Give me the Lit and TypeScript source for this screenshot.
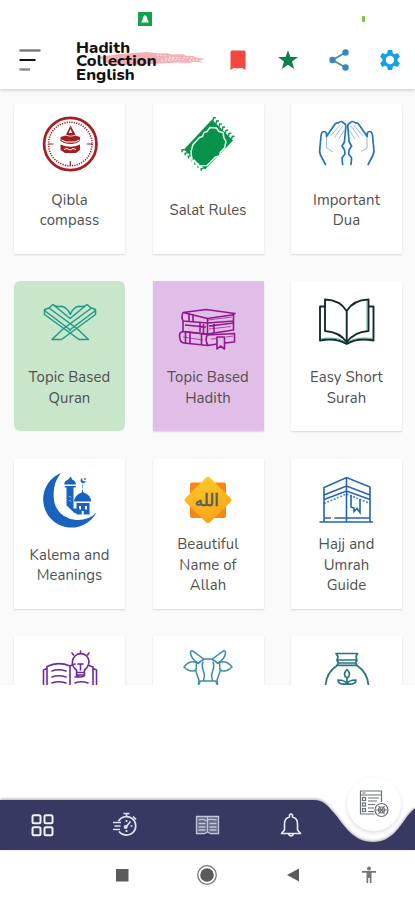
import { LitElement, html, svg, css } from "lit";
import { customElement, property } from "lit/decorators.js";

const range = (n: number) => Array.from({ length: n }, (_, i) => i);

const art: Record<string, unknown> = {
  compass: svg`
    <g fill="none" stroke="#a31f22">
      <circle cx="30.3" cy="30" r="26.2" stroke-width="2.7"/>
      <circle cx="30.3" cy="30" r="21.8" stroke-width="1.6" stroke-dasharray="1.2 1.2"/>
      <path stroke-width="1.2" d="M30.300 47v5M8.500 30h5M47 30h5"/>
    </g>
    <g fill="#a31f22">
      <path fill-rule="evenodd" d="M30.500 11.500l5 9q-5 2.500-9.500 0zM30.500 15l-1.800 4h3.600z"/>
      <path d="M20.500 23l5-1.500q5 2 10 0l4.500 1.500v4l-3.500 2q-6 2-12 0l-4-2z"/>
      <path d="M20.500 30.500q10 4.500 19.500 0v5.500l-4 3h-11l-4.500-3z"/>
    </g>
    <path d="M21.500 26l4.500 2h9l4.500-2M24 35.500l3-1 3 1.500 3-1.500 3 1" fill="none" stroke="#fff" stroke-width="1"/>`,
  rug: svg`
    <path d="M6 35.500L34 5.500 55 26.500 27 55.500z" fill="#07914b"/>
    <g stroke="#07914b" stroke-width="1.400" fill="none">
      ${range(7).map((i) => svg`<path d=${`M${6.5 + i * 3.2} ${35.5 + i * 3.1}l-2.600 .6 .2 2.200M${35 + i * 3.1} ${6.5 + i * 3.1}l.6-2.600 2.200-.2`}/>`)}
    </g>
    <path d="M13 37.500l2-7 6.500-7 3-1 1.500-4 3-1 3-4 6.500 .5 2.500 3.500 4 1 1 5.500 2 3.500-1.500 6.500-4 4-1 4-4 1-8.500 8.500-8.500.5-3-4-3.500-1z" fill="none" stroke="#e9fff1" stroke-width="1.500" stroke-linejoin="round"/>`,
  hands: svg`
    ${["", "translate(59.6 0) scale(-1 1)"].map((t) => svg`
      <g transform=${t} fill="none" stroke="#2372bd" stroke-linecap="round" stroke-linejoin="round">
        <path stroke-width="1.700" d="M8.500 50.500L3.500 41Q2 38 3 33l1-11q.5-4.500 3-4.500 3 0 2.500 5l7.500-11Q19 8 21 9q4-3 5.500 0 2.500.5 2.300 4l-.8 9-.6 6-2.400 4 2.500 4 .5 4-3 4 .6 6.500"/>
        <path stroke-width=".8" opacity=".6" d="M9.500 22v12l6 3.500M14 21.500l9-10.500M17.500 23.500l8-11.500M22 24.500l5-8"/>
      </g>`)}`,
  stand: svg`
    <g fill="none" stroke="#1f998b" stroke-width="1.500" stroke-linejoin="round">
      <path d="M12 48.500h9.500L55.500 23.500v-5L51.500 17 23 38z"/>
      <path d="M48.500 48.500H39L4.500 23.500v-5L9 17 37.500 38z"/>
      <path d="M4.500 19.500L31 39.500M55.500 19.500L29 39.500M9 17l4-3.500 17 14 17-14 4 3.500M13 13.500q4 3 8.500 1.700 6 1.300 8.800 8.300 2.500-7 8.500-8.300 4.500 1.300 8.500-1.700"/>
    </g>`,
  books: svg`
    <g fill="none" stroke="#92168c" stroke-width="1.600" stroke-linejoin="round">
      <path d="M5 21.500L28 18.500l29 4-3.500 1.500-24 3.500L5 21.500q-2 4 0 8.500l24.500 2v-4.500M29.500 32l26-2v-7M5 30.500v10l24.500 2.500 26-4v-9M29.500 32v11"/>
      <path d="M5 40.500q-4.500.5-3.200 6Q2 51.500 6 52l24 2.500 9-1.500M5 40.500l24.500 3q-3 5 .5 11M46.500 52l10-1v-8.500L29.500 44"/>
      <path d="M11 22v8M15 23v8M7 34l21 2M22 32v9M25.500 33v9M7.500 41.500v10.500M12 42v10.500M23.500 43v10.500M31 35l25-3M36 33v9M39 46v12l3.500-3 4 3V46z"/>
    </g>
    <path d="M30 29l24-3M31 38l22-2.500M33 48l6-.5M48 46l7-1M5 46l20 3" fill="none" stroke="#92168c" stroke-width="1" opacity=".7"/>`,
  book: svg`
    <g fill="none" stroke="#152b2b" stroke-width="1.900" stroke-linejoin="round">
      <path d="M29.700 20v33M29.700 20Q23 9 8 8.500V40q15 1 21.700 11.500M29.700 20Q36 9 51.500 8.500V40q-15 1-21.800 11.500"/>
      <path d="M8 15.500H3V49.500q16-3 26.700 3.500Q40 46.500 56.500 49.500v-34h-5"/>
    </g>
    <path d="M4.500 47.500q15-2 24 3.500M55 47.500q-15-2-24 3.500M50 10v29" fill="none" stroke="#2f9278" stroke-width=".8"/>`,
  crescent: svg`
    <g fill="#1763bd">
      <path d="M21 4A28.300 28.300 0 1 0 56.500 43.500Q49 51.500 36 51 19 49 14.500 34 11 16 21 4z"/>
      <path d="M31 7.500l1 3q4 1.500 3.900 5H24.200q0-3.500 4-5zM24.800 17h11v1.500h-2.300v21h6v5.500l-5-1-8-7.500V18.500h-1.700z"/>
      <path d="M42.500 20l1 3.500q7.500 2.500 7.500 9h-17q.5-6.500 7.700-9z"/>
      <path fill-rule="evenodd" d="M36.500 34h13v11.500h-13zM39 37v3.500h2V37zM45 37v3.500h2V37zM41.700 42v3.500h2V42z"/>
      <path d="M42 8.500q-3 3.500 0 5.500 3 1 4-2l-2.500.5q-1.700-1-1.500-4z"/><circle cx="45" cy="10" r=".9"/>
    </g>
    <path d="M28.500 27l3 1.500M28.500 31l3 1.500M42.500 15.500v4" stroke="#7facdf" stroke-width="1"/>`,
  allah: svg`
    <defs><linearGradient id="gold" x2=".3" y2="1"><stop stop-color="#ffcb2b"/><stop offset="1" stop-color="#fba718"/></linearGradient></defs>
    <rect x="12" y="13.500" width="36" height="35.500" rx="2" fill="#f58716"/>
    <path d="M28 8.700q2-2 4 0L52.500 29q2 2 0 4L32 53.300q-2 2-4 0L7.500 33q-2-2 0-4z" fill="url(#gold)"/>
    <text x="28.800" y="37" text-anchor="middle" font-family="DejaVu Sans, sans-serif" font-size="16.500" fill="#4f625a" stroke="#4f625a" stroke-width=".6">الله</text>`,
  kaaba: svg`
    <g fill="none" stroke="#2563ac" stroke-width="1.600">
      <path d="M2.500 53h53.500M7 53V18.500L29.500 8.500 53 18v35M29.500 8.500V53M7 49h7M17.500 49H53"/>
      <path d="M7 26l22.500-9L53 26M7 30.500L29.500 22 53 30.500"/>
      <path stroke-dasharray="2 1.500" stroke-width="1.700" opacity=".75" d="M7 34.500L29.500 25 53 34.500"/>
      <path d="M34 26v12l3 1v3.500l3-3 3 4V30"/>
    </g>`,
  idea: svg`
    <g fill="none" stroke="#6b2aa0" stroke-width="1.600" stroke-linecap="round">
      <path d="M7 50V20.500Q18 15 30 20M3.500 50V24L7 22.500M30 20v30M30 20q2.500-1.500 5-2M49 19.500l4 1.500v29M56.500 50V24L53 22.500"/>
      <path d="M12 25q6-2.500 14 0M12 31q6-2.500 14 0M12 37q6-2.500 14 0M35 37q6-2.500 13 0M35 31h3"/>
      <path d="M36.500 24q-5-3.500-4-9a8.300 8.300 0 0 1 16.500 0q0 5.500-4.500 9v5h-8zM37.500 26.500h6M38 18h5M40.500 18v6M37 30q3.500 2 7 0M40.500 5v2M32 7l1.500 2M49 7l-1.500 2"/>
    </g>`,
  cow: svg`
    <g fill="none" stroke="#3b8ca6" stroke-width="1.500" stroke-linejoin="round">
      <path d="M26.500 13.500L14.500 4.800q-2-.5-2 2 0 5.500 8 10.700M33.500 13.500L45.500 4.800q2-.5 2 2 0 5.500-8 10.700"/>
      <path d="M20 18q4-5.500 10-5 6-.5 10 5M18.500 16.500q-7-2.500-12.500 4.500 6 6 12 3zM41.500 16.500q7-2.500 12.500 4.500-6 6-12 3zM17.500 24q1.500 5 3.500 10l-.5 5 2-4h15l2 4-.5-5q2-5 3.500-10"/>
      <path d="M25 15.500q-1.500 5 0 8.500l1.500 5-1 6M35 15.500q1.500 5 0 8.500l-1.500 5 1 6"/>
    </g>`,
  jar: svg`
    <g fill="none" stroke="#267481" stroke-width="1.700" stroke-linejoin="round">
      <path d="M19 7.500h21.500l-1.500 3 1 4-1.500 2 1.500 2.800H20l1.500-2.800-1.500-2 1-4zM20.500 14h19M21 17h18.500"/>
      <path d="M20 19.500Q9 27 8.500 40M40 19.500Q51 27 51.500 40"/>
      <path d="M30 36v-4q-5-3.500 0-8.500 5 5 0 8.500M30 38q-1.500-4-9-4 0 5 9 4zM30 38q1.500-4 9-4 0 5-9 4z"/>
    </g>`,
};

const cards: [string, string[], string][] = [
  ["compass", ["Qibla", "compass"], ""],
  ["rug", ["Salat Rules"], ""],
  ["hands", ["Important", "Dua"], ""],
  ["stand", ["Topic Based", "Quran"], "green"],
  ["books", ["Topic Based", "Hadith"], "purple"],
  ["book", ["Easy Short", "Surah"], ""],
  ["crescent", ["Kalema and", "Meanings"], ""],
  ["allah", ["Beautiful", "Name of", "Allah"], ""],
  ["kaaba", ["Hajj and", "Umrah", "Guide"], ""],
  ["idea", [], ""],
  ["cow", [], ""],
  ["jar", [], ""],
];

@customElement("topic-card")
class TopicCard extends LitElement {
  @property() icon = "";
  @property({ attribute: false }) lines: string[] = [];
  static styles = css`
    :host { display: flex; flex-direction: column; align-items: center; height: 150px; padding-top: 10px;
      box-sizing: border-box; background: #fff; border-radius: 1px; box-shadow: 0 1px 2px rgba(0, 0, 0, .14); }
    :host(.green) { background: #c8e6c9; border-radius: 6px; box-shadow: none; }
    :host(.purple) { background: #e1bee7; }
    svg { width: 60px; height: 60px; flex: none; }
    .label { height: 73px; display: flex; flex-direction: column; justify-content: center; text-align: center;
      font: 400 14.9px/20.5px Nunito, Lato, sans-serif; letter-spacing: .1px; color: #505050; white-space: nowrap; }
  `;
  render() {
    return html`<svg viewBox="0 0 60 60">${art[this.icon]}</svg>
      <div class="label">${this.lines.map((l) => html`<span>${l}</span>`)}</div>`;
  }
}

@customElement("app-header")
class AppHeader extends LitElement {
  static styles = css`
    :host { display: block; height: 89px; background: #fff; box-shadow: 0 1px 4px rgba(0, 0, 0, .2); position: relative; z-index: 1; }
    .status { height: 30px; display: flex; align-items: flex-end; justify-content: space-between; padding: 0 50px 0 138px; box-sizing: border-box; }
    .app { width: 14px; height: 14px; margin-bottom: 4px; }
    .battery { width: 3px; height: 6px; background: #7cc142; border-radius: 1px; margin-bottom: 8px; }
    .bar { height: 59px; display: flex; align-items: center; padding: 0 13px 0 19px; }
    .menu { width: 22px; height: 24px; }
    .brand { position: relative; margin-left: 35px; margin-top: 3px; width: 131px; font: 800 16.6px/13.5px Nunito, Lato, sans-serif; letter-spacing: .1px; color: #111; }
    .brand span { display: block; position: relative; }
    .brush { position: absolute; left: 23px; top: 10px; width: 107px; height: 16px; }
    .actions { flex: 1; display: flex; justify-content: space-between; margin-left: 18.5px; }
    .actions svg { width: 24px; height: 24px; }
  `;
  render() {
    return html`
      <div class="status">
        <svg class="app" viewBox="0 0 14 14"><path fill="#12a24b" d="M0 0h14v14H0z"/><path fill="#fff" d="M7 3l2 2 .5 3L11 10.500H3L4.500 8 5 5z"/></svg>
        <div class="battery"></div>
      </div>
      <div class="bar">
        <svg class="menu" viewBox="0 0 22 24"><path d="M.5 2.500h21" stroke="#777" stroke-width="2.400"/><path d="M.5 12h16" stroke="#111" stroke-width="2"/><path d="M.5 21.500h10.500" stroke="#888" stroke-width="2.400"/></svg>
        <div class="brand">
          <svg class="brush" viewBox="0 0 107 16">
            <path d="M0 6L20 3 48 1l14 1.500 6-.5 4 1.500 12-.2 3 1.500 7 .2 3 1.500 9 1.500-6 1.500 4 2-10-.8-3 1.300-12-.5-18 1-25 1-24 1L8 12z" fill="#f4a3aa" opacity=".85"/>
            <path d="M58 4l10 1M62 10l13-1M70 6l10 1M76 9l11-.5M84 6.500l9 .5M90 9.500l9-.5M66 7.500h9" stroke="#fff" stroke-width="1" stroke-dasharray="2 1.500" opacity=".7"/>
          </svg>
          <span>Hadith</span><span>Collection</span><span>English</span>
        </div>
        <div class="actions">
          <svg viewBox="0 0 24 24"><path fill="#f4483f" d="M6 2.500h12q1.500 0 1.500 1.500v18L16 19.800l-4 .8-4-.8L4.500 22V4Q4.500 2.500 6 2.500z"/></svg>
          <svg viewBox="0 0 24 24"><path fill="#0b8048" d="M12 2l2.400 7H22l-6 4.500 2.200 7.500L12 16.800 5.800 21 8 13.500 2 9h7.600z"/></svg>
          <svg viewBox="0 0 24 24"><path d="M18.500 4.500L5.500 12l13 7.500" fill="none" stroke="#4c8f8a" stroke-width="1.700"/><g fill="#3785c4"><circle cx="18.500" cy="4.500" r="3.200"/><circle cx="5.500" cy="12" r="3.200"/><circle cx="18.500" cy="19.500" r="3.200"/></g></svg>
          <svg viewBox="0 0 24 24"><path fill="#14a0ea" fill-rule="evenodd" d="M9.800 2h4.400l.6 3.200 1.800 1L19.700 5l2.200 3.800-2.400 2.200v2l2.400 2.200-2.200 3.800-3.100-1.200-1.800 1-.6 3.200H9.800l-.6-3.200-1.800-1L4.300 19l-2.200-3.800L4.500 13v-2L2.100 8.800 4.300 5l3.100 1.200 1.800-1zM12 7.800a4.200 4.200 0 1 0 0 8.400 4.200 4.200 0 0 0 0-8.400z"/></svg>
        </div>
      </div>`;
  }
}

@customElement("bottom-bar")
class BottomBar extends LitElement {
  static styles = css`
    :host { display: block; position: relative; height: 50px; }
    .shape { position: absolute; left: 0; bottom: 0; width: 415px; height: 74px; filter: drop-shadow(0 -1px 1.5px rgba(0, 0, 0, .35)); }
    .tabs { position: relative; display: grid; grid-template-columns: repeat(4, 83px); height: 50px; align-items: center; justify-items: center; }
    .tabs svg { width: 26px; height: 26px; }
    .fab { position: absolute; left: 347px; top: -23px; width: 54px; height: 54px; border-radius: 50%; background: #fff;
      box-shadow: 0 2px 4px rgba(0, 0, 0, .13); display: flex; align-items: center; justify-content: center; }
    .fab svg { width: 32px; height: 32px; }
  `;
  render() {
    return html`
      <svg class="shape" viewBox="0 0 415 74"><path fill="#373963" d="M0 24h314c9 0 13 5 20 13 9 10 18 29 39 29s28-19 37-29l5-5v42H0z"/></svg>
      <div class="tabs">
        <svg viewBox="0 0 26 26"><g fill="none" stroke="#f0f2fa" stroke-width="2"><rect x="3.500" y="3.300" width="8" height="8" rx="1.500"/><rect x="15.500" y="3.300" width="8" height="8" rx="1.500"/><rect x="3.500" y="15.300" width="8" height="8" rx="1.500"/><rect x="15.500" y="15.300" width="8" height="8" rx="1.500"/></g></svg>
        <svg viewBox="0 0 26 26"><g fill="none" stroke="#dde0ed" stroke-width="1.700"><path d="M6.500 9A9.300 9.300 0 1 1 7 19.500M11.500 1.500h6M14.500 2v3.500M21 4.500l3 3M1 10.500h8M2.500 14h6M1 17.500h7"/><path d="M14.500 8v2M20.500 14h-2M14.500 20v-2M13.500 15.500l5-6" /></g><circle cx="13.700" cy="15" r="2" fill="#dde0ed"/></svg>
        <svg viewBox="0 0 26 26"><path fill="#a3a6bd" opacity=".45" d="M1 4.500h23v16H1z"/><g fill="none" stroke="#c4c7d8" stroke-width="1.300"><path d="M1.500 4.500h22v17h-8l-3-1.500-3 1.500h-8zM12.500 5v15M3.500 8q4-1.500 7.500.5 4-2 10.500-.5M3.500 11.500h7M14.500 11.500h7M3.500 15h7M14.500 15h7M3.500 18h7M14.500 18h7"/></g></svg>
        <svg viewBox="0 0 26 26"><path d="M3.500 21.500h19l-3-3.500v-6q0-6-5-7V3q-1.500-2-3 0v2q-5 1-5 7v6zM10.500 22q2.500 4 5 0" fill="none" stroke="#eceef7" stroke-width="1.600" stroke-linejoin="round"/></svg>
      </div>
      <div class="fab">
        <svg viewBox="0 0 32 32"><g fill="none" stroke="#697078" stroke-width="1.200"><path d="M23.500 14V3H2.500v23h14M2.500 7h21M4.500 5h3M10 10h11M10 13h9M10 16.500h7M10 20h6M10 23.500h6"/><rect x="4.500" y="9.500" width="3" height="3"/><rect x="4.500" y="15" width="3" height="3"/><rect x="4.500" y="20.500" width="3" height="3"/><circle cx="23.500" cy="22" r="6.500"/><path d="M20.500 18l6 8M26.500 18l-6 8M17.500 22h12"/><circle cx="23.500" cy="22" r="3"/></g></svg>
      </div>`;
  }
}

@customElement("app-root")
class AppRoot extends LitElement {
  static styles = css`
    :host { display: flex; flex-direction: column; width: 415px; height: 900px; background: #fff; overflow: hidden; }
    .list { height: 596px; flex: none; box-sizing: border-box; overflow: hidden; background: #fafafa; padding: 14.5px 13.5px 0 14px;
      display: grid; grid-template-columns: repeat(3, 111px); grid-auto-rows: 150px; column-gap: 27.5px; row-gap: 27.5px; }
    .spacer { flex: 1; }
    .system { height: 50px; display: grid; grid-template-columns: 80px 83px 88px 83px 70px; align-items: center; justify-items: center; }
    .system svg { width: 22px; height: 22px; }
  `;
  render() {
    return html`
      <app-header></app-header>
      <main class="list">${cards.map(([icon, lines, tone]) => html`<topic-card class=${tone} .icon=${icon} .lines=${lines}></topic-card>`)}</main>
      <div class="spacer"></div>
      <bottom-bar></bottom-bar>
      <nav class="system">
        <span></span>
        <svg viewBox="0 0 22 22"><path fill="#5b5b5b" d="M5 5h12.500v12.500H5z"/></svg>
        <svg viewBox="0 0 22 22"><circle cx="11" cy="11" r="6.800" fill="#5b5b5b"/><circle cx="11" cy="11" r="9.300" fill="none" stroke="#777" stroke-width="1.300"/></svg>
        <svg viewBox="0 0 22 22"><path fill="#5b5b5b" d="M5 11L17 4.500v13z"/></svg>
        <svg viewBox="0 0 22 22"><circle cx="11" cy="4.500" r="2" fill="#777"/><path fill="#777" d="M4 7h14v1.800h-4.500V19h-1.700v-5h-1.600v5H8.500V8.800H4z"/></svg>
      </nav>`;
  }
}
